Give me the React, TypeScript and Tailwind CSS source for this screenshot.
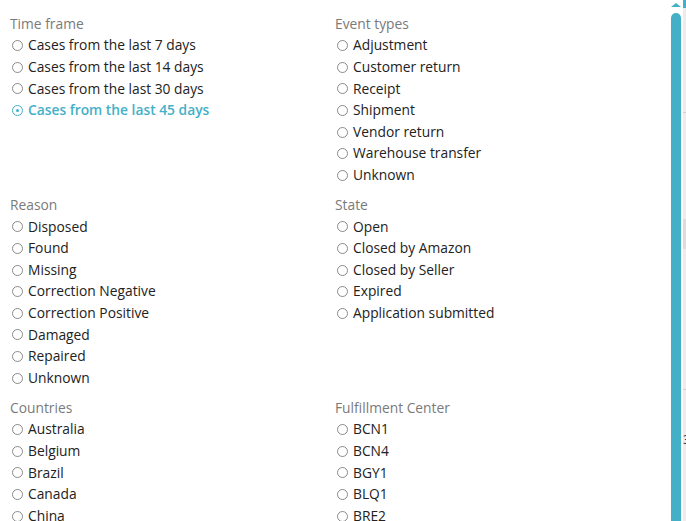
import React from "react";

type Group = {
	title: string;
	options: string[];
	selected?: string;
};

const leftGroups: Group[] = [
	{
		title: "Time frame",
		options: [
			"Cases from the last 7 days",
			"Cases from the last 14 days",
			"Cases from the last 30 days",
			"Cases from the last 45 days",
		],
		selected: "Cases from the last 45 days",
	},
	{
		title: "Reason",
		options: [
			"Disposed",
			"Found",
			"Missing",
			"Correction Negative",
			"Correction Positive",
			"Damaged",
			"Repaired",
			"Unknown",
		],
	},
	{
		title: "Countries",
		options: ["Australia", "Belgium", "Brazil", "Canada", "China"],
	},
];

const rightGroups: Group[] = [
	{
		title: "Event types",
		options: [
			"Adjustment",
			"Customer return",
			"Receipt",
			"Shipment",
			"Vendor return",
			"Warehouse transfer",
			"Unknown",
		],
	},
	{
		title: "State",
		options: [
			"Open",
			"Closed by Amazon",
			"Closed by Seller",
			"Expired",
			"Application submitted",
		],
	},
	{
		title: "Fulfillment Center",
		options: ["BCN1", "BCN4", "BGY1", "BLQ1", "BRE2"],
	},
];

const Radio = ({ checked }: { checked: boolean }) => (
	<span
		className={`flex h-[11px] w-[11px] shrink-0 items-center justify-center rounded-full border ${
			checked ? "border-[#44b0c8]" : "border-[#8a8a8a]"
		}`}
	>
		{checked && <span className="h-[3px] w-[3px] rounded-full bg-[#44b0c8]" />}
	</span>
);

const FilterGroup = ({ group, minRows }: { group: Group; minRows: number }) => (
	<div className="pb-[7px]">
		<div className="h-[23px] leading-[23px] text-[#7a7a7a]">{group.title}</div>
		<ul style={{ minHeight: minRows * 21.6 }}>
			{group.options.map((opt) => {
				const checked = opt === group.selected;
				return (
					<li key={opt} className="flex h-[21.6px] items-center gap-[5px] pl-[2px]">
						<Radio checked={checked} />
						<span
							className={
								checked ? "font-semibold text-[#44b0c8]" : "text-[#222222]"
							}
						>
							{opt}
						</span>
					</li>
				);
			})}
		</ul>
	</div>
);

const App = () => {
	return (
		<div
			className="flex h-[521px] w-[686px] overflow-hidden bg-white text-[13.8px]"
			style={{ fontFamily: '"Open Sans", "Noto Sans", sans-serif' }}
		>
			{/* Filters */}
			<div className="grid flex-1 grid-cols-[325px_1fr] px-[10px] pt-[12px]">
				<div className="flex flex-col">
					{leftGroups.map((g, i) => (
						<FilterGroup key={g.title} group={g} minRows={i === 0 ? 7 : 8} />
					))}
				</div>
				<div className="flex flex-col">
					{rightGroups.map((g, i) => (
						<FilterGroup key={g.title} group={g} minRows={i === 0 ? 7 : 8} />
					))}
				</div>
			</div>

			{/* Scrollbar */}
			<div className="flex w-[15px] flex-col items-center pt-[3px]">
				<div className="h-0 w-0 border-x-[5px] border-b-[4px] border-x-transparent border-b-[#44b0c8]" />
				<div className="mt-[6px] w-[10px] flex-1 rounded-t-full bg-[#44b0c8]" />
			</div>

			{/* page behind */}
			<div className="relative w-[3px] overflow-hidden bg-[#ececec]">
				<div className="h-[8px] bg-[#44b0c8]" />
				<div className="mt-[104px] h-px bg-[#cfcfcf]" />
				<div className="mt-[106px] h-[30px] bg-[#dcdcdc]" />
				<div className="mt-[140px] h-px bg-[#cfcfcf]" />
				<span className="absolute left-0 top-[433px] text-[13px] leading-none text-[#333]">
					3
				</span>
			</div>
		</div>
	);
};

export default App;
